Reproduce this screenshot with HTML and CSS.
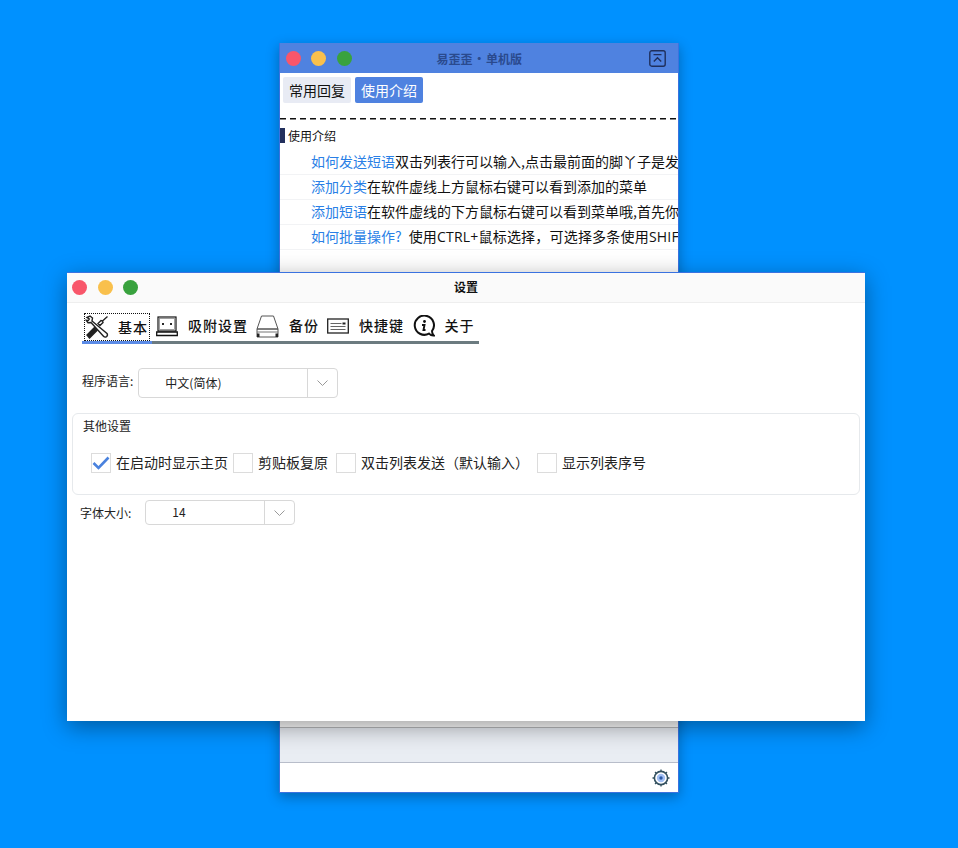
FILE: index.html
```html
<!DOCTYPE html>
<html lang="zh-CN">
  <head>
    <meta charset="UTF-8" />
    <title>易歪歪 • 单机版</title>
    <link rel="stylesheet" href="styles.css">
  </head>
  <body>
    <!-- 主窗口 -->
    <div class="window main-window">
      <div class="main-titlebar">
        <div class="dots">
          <span class="dot dot-red"></span>
          <span class="dot dot-yellow"></span>
          <span class="dot dot-green"></span>
        </div>
        <div class="main-title">易歪歪 • 单机版</div>
        <svg class="collapse-icon" width="17" height="17" viewBox="0 0 17 17" fill="none" stroke="#1f2f5c" stroke-width="1.4">
          <rect x="0.8" y="0.8" width="15.4" height="15.4" rx="2"/>
          <path d="M4.5 4.6h8M4.8 11.5L8.500 7.800l3.700 3.700"/>
        </svg>
      </div>
      <div class="main-tabs">
        <div class="main-tab">常用回复</div>
        <div class="main-tab main-tab-active">使用介绍</div>
      </div>
      <div class="dash-line"></div>
      <div class="section-head">使用介绍</div>
      <div class="intro-row"><a class="intro-link">如何发送短语</a>双击列表行可以输入,点击最前面的脚丫子是发送到聊天窗口</div>
      <div class="intro-row"><a class="intro-link">添加分类</a>在软件虚线上方鼠标右键可以看到添加的菜单</div>
      <div class="intro-row"><a class="intro-link">添加短语</a>在软件虚线的下方鼠标右键可以看到菜单哦,首先你要选择分类</div>
      <div class="intro-row"><a class="intro-link">如何批量操作?</a><span class="intro-note">使用CTRL+鼠标选择，可选择多条使用SHIFT+鼠标选择</span></div>
      <div class="list-blank"></div>
      <div class="main-spacer"></div>
      <div class="main-footer">
        <svg width="18" height="18" viewBox="0 0 18 18">
          <circle cx="9" cy="9" r="6.6" fill="#fff" stroke="#33505f" stroke-width="1.6"/>
          <path d="M9 0.5v2.4M9 15.1v2.4M0.5 9h2.4M15.1 9h2.4M3 3l1.4 1.4M13.6 13.6L15 15M3 15l1.4-1.4M13.6 4.4L15 3" stroke="#33505f" stroke-width="1.3"/>
          <circle cx="9" cy="9" r="4.2" fill="#a3c0f5"/>
          <circle cx="9" cy="9" r="1.7" fill="#2b5aa8"/>
        </svg>
      </div>
    </div>

    <!-- 设置窗口 -->
    <div class="window settings-window">
      <div class="settings-titlebar">
        <div class="dots">
          <span class="dot dot-red"></span>
          <span class="dot dot-yellow"></span>
          <span class="dot dot-green"></span>
        </div>
        <div class="settings-title">设置</div>
      </div>
      <div class="settings-body">
        <div class="tool-tabs">
          <div class="tool-tab tool-tab-active tab-basic">
            <div class="tab-focus">
              <svg width="24" height="24" viewBox="0 0 24 24" fill="none" stroke="#222" stroke-width="1.4">
                <path d="M2 2.500l3-1.500 2.500 2-.5 3L22 18.500c.8 1 .4 2.600-.5 3.200-1 .6-2.300.3-3-.5L6 7.500l-3 .3-1.700-2.500 2 .2 1-1.500z"/>
                <path d="M22.500 1.500l-5 4.500-1.500-.5-3 3 2 2 3-3-.5-1.500"/>
                <path d="M9.500 12.500L2 20l2.500 3 7.500-7.500z" fill="#222"/>
              </svg>
              <span>基本</span>
            </div>
          </div>
          <div class="tool-tab tab-snap">
            <svg width="22" height="21" viewBox="0 0 22 21" fill="none" stroke="#111" stroke-width="1.200">
              <rect x="2" y="1" width="18" height="14"/>
              <rect x="3.500" y="2.500" width="15" height="11" stroke="#888" stroke-width="0.800"/>
              <path d="M0.700 16h20.600v3.500H0.700z" stroke-width="1.300"/>
              <path d="M6 7l2 2M8 7l-2 2M14 7l2 2M16 7l-2 2" stroke-width="0.900"/>
            </svg>
            <span>吸附设置</span>
          </div>
          <div class="tool-tab tab-backup">
            <svg width="23" height="23" viewBox="0 0 23 23" fill="none" stroke="#555" stroke-width="1">
              <path d="M5.500 1h12l4.500 13H1z"/>
              <path d="M1 14h21v8H1z"/>
              <path d="M1 17h21" stroke="#777"/>
              <path d="M1 18.500h2.500v3.500H1zM19.500 18.500H22v3.500h-2.500z" fill="#222" stroke="none"/>
            </svg>
            <span>备份</span>
          </div>
          <div class="tool-tab tab-keys">
            <svg width="22" height="16" viewBox="0 0 22 16" fill="none" stroke="#222" stroke-width="1.300">
              <rect x="0.700" y="1" width="20.600" height="14"/>
              <path d="M3.500 5.500h11M3.500 8.500h15M3.500 11.500h15" stroke="#666" stroke-width="1"/>
              <path d="M15.500 4.500h3v2h-3z" fill="#222" stroke="none"/>
            </svg>
            <span>快捷键</span>
          </div>
          <div class="tool-tab tab-about">
            <svg width="22" height="22" viewBox="0 0 22 22" fill="none" stroke="#111" stroke-width="2">
              <path d="M16 18.600A9.600 9.600 0 1 1 19 16c0 2 .5 3.500 1.800 4.500-2 .2-3.500-.6-4.800-1.900z"/>
              <circle cx="11.500" cy="6.500" r="1.400" fill="#111" stroke="none"/>
              <path d="M9 10h2.500l-1 5h2" stroke-width="1.900"/>
            </svg>
            <span>关于</span>
          </div>
        </div>

        <div class="lang-row">
          <label class="field-label label-raised">程序语言:</label>
          <div class="combo combo-lang">
            <div class="combo-value">中文(简体)</div>
            <div class="combo-arrow">
              <svg width="11" height="6" viewBox="0 0 11 6" fill="none" stroke="#999"><path d="M.5 .5l5 5 5-5"/></svg>
            </div>
          </div>
        </div>

        <div class="group-box">
          <div class="group-title">其他设置</div>
          <div class="check-row">
            <div class="check-item">
              <span class="check-box">
                <svg width="18" height="14" viewBox="0 0 18 14" fill="none" stroke="#4a82de" stroke-width="2.600"><path d="M1.500 7l5 5L16.500 1.500"/></svg>
              </span>
              <span>在启动时显示主页</span>
            </div>
            <div class="check-item item-clip"><span class="check-box"></span><span>剪贴板复原</span></div>
            <div class="check-item item-wide"><span class="check-box"></span><span>双击列表发送（默认输入）</span></div>
            <div class="check-item"><span class="check-box"></span><span>显示列表序号</span></div>
          </div>
        </div>

        <div class="font-row">
          <label class="field-label">字体大小:</label>
          <div class="combo combo-font">
            <div class="combo-value">14</div>
            <div class="combo-arrow">
              <svg width="11" height="6" viewBox="0 0 11 6" fill="none" stroke="#999"><path d="M.5 .5l5 5 5-5"/></svg>
            </div>
          </div>
        </div>
      </div>
    </div>
  </body>
</html>
```

FILE: styles.css
```css
* {
  margin: 0;
  padding: 0;
  box-sizing: border-box;
}

body {
  width: 958px;
  height: 848px;
  overflow: hidden;
  position: relative;
  background: #0091ff;
  font-family: "Noto Sans CJK SC", "Liberation Sans", sans-serif;
  color: #111;
}

.window {
  position: absolute;
  display: flex;
  flex-direction: column;
  background: #fff;
  overflow: hidden;
}

.main-window {
  left: 279px;
  top: 43px;
  width: 400px;
  height: 750px;
  border: 1px solid #3a72e0;
  border-top: none;
  box-shadow: 0 4px 12px rgba(0, 0, 0, 0.3);
}

.settings-window {
  left: 67px;
  top: 272px;
  width: 798px;
  height: 449px;
  border-top: 1px solid #3a72e0;
  box-shadow: 0 6px 22px rgba(0, 0, 0, 0.38);
}

.dots {
  display: flex;
  gap: 10.5px;
}

.dot {
  width: 15px;
  height: 15px;
  border-radius: 50%;
}

.dot-red {
  background: #f8566a;
}

.dot-yellow {
  background: #f9c04c;
}

.dot-green {
  background: #39a23e;
}

.main-titlebar {
  height: 30px;
  flex-shrink: 0;
  display: flex;
  align-items: center;
  padding: 0 12px 0 5.5px;
  background: #4f82e0;
  position: relative;
}

.main-title {
  flex: 1;
  text-align: center;
  font-size: 12px;
  font-weight: bold;
  color: #2a4a8e;
  padding-right: 42px;
  word-spacing: -2px;
}

.main-tabs {
  display: flex;
  gap: 4px;
  padding: 4px 3px 0;
}

.main-tab {
  height: 26px;
  padding: 0 6px;
  line-height: 26px;
  font-size: 14px;
  border-radius: 2px;
  background: #e8ebf4;
}

.main-tab-active {
  background: #4f82e0;
  color: #fff;
}

.dash-line {
  margin-top: 15px;
  height: 2px;
  flex-shrink: 0;
  background: repeating-linear-gradient(to right, #111 0, #111 6px, transparent 6px, transparent 10px);
  background-size: 100% 1.5px;
  background-repeat: no-repeat;
}

.section-head {
  margin-top: 8px;
  height: 15px;
  flex-shrink: 0;
  line-height: 15px;
  font-size: 12px;
  border-left: 5px solid #222f5c;
  padding-left: 3px;
  margin-bottom: 7px;
}

.intro-row {
  height: 25px;
  flex-shrink: 0;
  line-height: 22px;
  font-size: 14px;
  padding-left: 31px;
  white-space: nowrap;
  overflow: hidden;
  border-bottom: 1px solid #f2f3f5;
}

.intro-link {
  color: #2a7fe6;
}

.intro-note {
  margin-left: 7px;
  font-family: "Open Sans", "Noto Sans CJK SC", sans-serif;
  letter-spacing: 0.2px;
}

.list-blank {
  height: 478px;
  flex-shrink: 0;
  background: #fff;
  border-bottom: 1px solid #b8b9bc;
}

.main-spacer {
  flex: 1;
  background: #e9edf3;
  border-bottom: 1px solid #b8bdca;
}

.main-footer {
  height: 29px;
  flex-shrink: 0;
  display: flex;
  align-items: center;
  justify-content: flex-end;
  padding-right: 8px;
  background: #fff;
}

.settings-titlebar {
  height: 30px;
  flex-shrink: 0;
  display: flex;
  align-items: center;
  padding-left: 5px;
  background: #fafafa;
  border-bottom: 1px solid #eeeeee;
  position: relative;
}

.settings-title {
  position: absolute;
  left: 0;
  right: 0;
  top: 5px;
  text-align: center;
  font-size: 12px;
  font-weight: bold;
  color: #111;
}

.settings-body {
  flex: 1;
  display: flex;
  flex-direction: column;
}

.tool-tabs {
  display: flex;
  margin: 8px 0 0 15px;
  width: 397px;
  height: 33px;
}

.tool-tab {
  display: flex;
  align-items: center;
  justify-content: center;
  gap: 10px;
  height: 33px;
  padding-bottom: 3px;
  border-bottom: 3px solid #6c7b80;
  font-size: 14px;
  font-weight: 500;
  color: #111;
  letter-spacing: 1px;
}

.tool-tab > svg {
  margin-top: 3px;
}

.tab-basic {
  width: 70px;
}

.tab-snap {
  width: 100px;
}

.tab-backup {
  width: 71px;
}

.tab-keys {
  width: 85px;
}

.tab-about {
  width: 71px;
}

.tool-tab-active {
  border-bottom-color: #5b8be6;
  align-items: flex-end;
  padding-bottom: 0;
}

.tab-focus {
  display: flex;
  align-items: center;
  gap: 9px;
  height: 28px;
  width: 66px;
  padding-bottom: 1px;
  border: 1px dotted #111;
}

.lang-row {
  display: flex;
  align-items: center;
  margin: 24px 0 0 15px;
  gap: 5px;
}

.field-label {
  font-size: 12px;
  line-height: 24px;
  color: #222;
}

.label-raised {
  padding-bottom: 5px;
}

.combo {
  display: flex;
  align-items: stretch;
  border: 1px solid #d8d8d8;
  border-radius: 4px;
  background: #fff;
  font-size: 12px;
}

.combo-lang {
  width: 200px;
  height: 30px;
}

.combo-font {
  width: 150px;
  height: 25px;
}

.combo-value {
  flex: 1;
  padding: 0 0 2px 26px;
  display: flex;
  align-items: center;
  color: #222;
}

.combo-arrow {
  width: 30px;
  border-left: 1px solid #d8d8d8;
  display: flex;
  align-items: center;
  justify-content: center;
}

.group-box {
  margin: 15px 5px 0;
  height: 82px;
  border: 1px solid #e6e9ec;
  border-radius: 6px;
  padding: 3px 10px;
}

.group-title {
  font-size: 12px;
  line-height: 18px;
  color: #222;
}

.check-row {
  display: flex;
  margin: 18px 0 0 8px;
  gap: 5px;
}

.check-item {
  display: flex;
  align-items: center;
  gap: 5px;
  font-size: 14px;
  line-height: 18px;
  color: #222;
  white-space: nowrap;
}

.item-clip {
  margin-right: 3px;
}

.item-wide {
  width: 196px;
}

.check-box {
  width: 20px;
  height: 20px;
  display: flex;
  align-items: center;
  justify-content: center;
  border: 1px solid #dcdcdc;
  background: #fff;
}

.check-item > span:last-child:not(.check-box) {
  margin-bottom: 2px;
}

.font-row {
  display: flex;
  align-items: center;
  margin: 5px 0 0 13px;
  gap: 14px;
}
```
